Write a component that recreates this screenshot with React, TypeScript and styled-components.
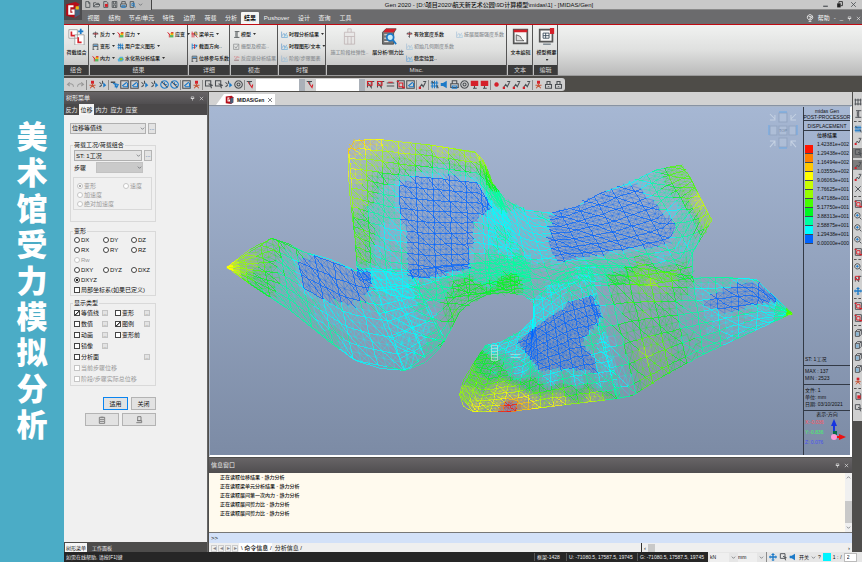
import React from "react";
import styled, { createGlobalStyle, css } from "styled-components";

const Global = createGlobalStyle`
  * { box-sizing: border-box; }
  html, body { margin: 0; height: 100%; }
  body { font: 6px/8px "Liberation Sans", "Noto Sans CJK SC", sans-serif; color: #111; overflow: hidden; }
  button, input, select { font: inherit; color: inherit; margin: 0; }
  button { padding: 0; border: 0; background: none; white-space: nowrap; }
  svg { display: block; flex: none; }
`;

/* ---------- frame ---------- */
const Page = styled.div`display: flex; height: 100vh; background: #4bacc6;`;
const Banner = styled.aside`
  width: 64px; flex: none; display: flex; justify-content: center; padding-top: 117px;
  background: #4bacc6;
`;
const BannerTitle = styled.h1`
  margin: 0; width: 32px; color: #fff; text-align: center; word-break: break-all;
  font: 900 31px/36px "Noto Sans CJK SC", sans-serif;
`;
const AppFrame = styled.main`flex: 1; min-width: 0; display: flex; flex-direction: column; background: #4f4e4c;`;

const Top = styled.header`display: grid; grid-template-columns: 18px 1fr; flex: none; background: #6b6b6d; border-bottom: 1px solid #c00a12;`;
const Logo = styled.button`height: 20px; align-self: start; background: #4c4c4e; display: grid; place-items: center;`;
const TopRows = styled.div`min-width: 0;`;
const TitleRow = styled.div`display: flex; align-items: center; height: 10px; background: #c9c9c9; border-bottom: 1px solid #8a8a8a;`;
const QuickBar = styled.div`display: flex; align-items: center; gap: 2px; width: 70px; height: 10px; padding-left: 2px; border-right: 1px solid #444; background: #bdbdbd;`;
const Title = styled.div`flex: 1; text-align: center; padding-left: 4px; white-space: nowrap; font-size: 6px; font-weight: 500;`;
const WinButtons = styled.div`display: flex; gap: 6px; padding-right: 4px; button { width: 8px; height: 8px; }`;
const MenuRow = styled.nav`display: flex; align-items: flex-end; height: 14px; padding-left: 1px; color: #f4f4f4;`;
const MenuTab = styled.button<{ $w: number; $on?: boolean }>`
  width: ${p => p.$w}px; height: 12px; text-align: center; font-size: 6px;
  ${p => p.$on && css`background: #f4f4f4; color: #111; border-radius: 1px 1px 0 0; font-weight: 700;`}
`;
const MenuEnd = styled.div`margin-left: auto; display: flex; align-items: center; gap: 4px; height: 12px; padding-right: 1px;`;

/* ---------- ribbon ---------- */
const Ribbon = styled.section`display: flex; gap: 1px; flex: none; height: 51px; background: linear-gradient(#f1f2f1, #dfe0df 50%, #bababa); border-bottom: 1px solid #999;`;
const Group = styled.section<{ $w: number }>`width: ${p => p.$w}px; flex: none; display: flex; flex-direction: column; border-right: 1px solid #555;`;
const GroupBody = styled.div`flex: 1; display: flex; gap: 2px; padding: 3px 0 0 2px;`;
const GroupName = styled.h2`margin: 0; height: 10px; background: #3b3b3b; color: #d8d8d8; font: inherit; line-height: 10px; text-align: center;`;
const Col = styled.div`display: flex; flex-direction: column;`;
const PushedCol = styled(Col)`margin-left: auto; padding-right: 5px;`;
const Tool = styled.button<{ $off?: boolean }>`
  display: flex; align-items: center; gap: 1px; height: 12px; font-size: 5px; font-weight: 500; color: ${p => (p.$off ? "#8d9195" : "#111")};
  svg { opacity: ${p => (p.$off ? 0.5 : 1)}; }
`;
const Caret = styled.i`width: 3px; height: 2px; flex: none; margin-left: 1px; background: #333; clip-path: polygon(0 0, 100% 0, 50% 100%);`;
const BigTool = styled.button<{ $w: number; $off?: boolean }>`
  display: flex; flex-direction: column; align-items: center; gap: 3px; width: ${p => p.$w}px; height: 36px; font-size: 5px; font-weight: 500;
  color: ${p => (p.$off ? "#8d9195" : "#111")}; svg { opacity: ${p => (p.$off ? 0.4 : 1)}; }
`;

const ToolStrip = styled.div`display: flex; height: 16px; flex: none; padding: 2px 0 1px; background: #4e4c48;`;
const Tools = styled.div`display: flex; align-items: center; gap: 1px; padding: 0 2px; background: #cfcfcf; border-radius: 0 3px 3px 0;`;
const IconButton = styled.button<{ $on?: boolean }>`width: 9px; height: 10px; display: grid; place-items: center; ${p => p.$on && css`background: #7d7d7d;`}`;
const Rule = styled.span`width: 1px; height: 10px; background: #8c8c8c;`;
const StripSelect = styled.select<{ $w: number }>`width: ${p => p.$w}px; height: 12px; border: 0; border-right: 6px solid #aab0b8; background: #fff; appearance: none; padding: 0;`;

/* ---------- work area ---------- */
const Work = styled.div`flex: 1; min-height: 0; display: grid; grid-template-columns: 144px minmax(0, 1fr) 9px; gap: 1px;`;
const Panel = styled.aside`display: flex; flex-direction: column; background: #f0f0f0; border-right: 1px solid #666;`;
const DarkHead = styled.div<{ $h: number }>`display: flex; align-items: center; justify-content: space-between; height: ${p => p.$h}px; flex: none; padding: 0 3px 0 2px; background: linear-gradient(#676466, #504e50); color: #eee;`;
const HeadIcons = styled.span`display: flex; gap: 4px;`;
const PanelTabs = styled.div`display: flex; height: 11px; flex: none; background: #4a4849; color: #eee;`;
const PanelTab = styled.button<{ $on?: boolean }>`width: 15px; height: 11px; ${p => p.$on && css`background: #f4f4f4; color: #111;`}`;
const Form = styled.form`flex: 1; width: 94px; padding: 7px 2px 0 6px; display: flex; flex-direction: column;`;
const Line = styled.div<{ $h?: number }>`display: flex; align-items: center; height: ${p => p.$h ?? 12}px; gap: 2px;`;
const Pick = styled.span<{ $w: number; $off?: boolean }>`
  width: ${p => p.$w}px; height: 11px; display: flex; align-items: center; 
  border: 1px solid ${p => (p.$off ? "#c2c2c2" : "#b0b0b0")}; background: ${p => (p.$off ? "#cacaca" : "#e3e3e3")};
  select { flex: 1; min-width: 0; height: 9px; padding: 0 1px; border: 0; background: none; appearance: none; }
`;
const StepLabel = styled.label`width: 20px;`;
const Dots = styled.button<{ $small?: boolean }>`
  width: ${p => (p.$small ? 6 : 8)}px; height: ${p => (p.$small ? 6 : 11)}px; line-height: 5px; flex: none;
  border: 1px solid ${p => (p.$small ? "#c4c4c4" : "#b5b5b5")}; background: #e3e3e3; color: ${p => (p.$small ? "#777" : "#1b4e94")};
`;
const Box = styled.fieldset<{ $mt: number; $h: number }>`
  margin: ${p => p.$mt}px 0 0; padding: 0 3px; height: ${p => p.$h}px; min-width: 0; border: 1px solid #d9d9d9;
  legend { padding: 0 1px; margin-left: -1px; height: 8px; }
`;
const Inner = styled.div`margin: 4px 0 0 -1px; padding: 3px; height: 33px; border: 1px solid #d9d9d9;`;
const Cells = styled.div<{ $cols: string; $row: number }>`display: grid; grid-template-columns: ${p => p.$cols}; grid-auto-rows: ${p => p.$row}px; align-items: center;`;
const Choice = styled.label<{ $off?: boolean; $wide?: boolean }>`
  display: flex; align-items: center; gap: 1px; white-space: nowrap; color: ${p => (p.$off ? "#999" : "#111")};
  ${p => p.$wide && css`grid-column: 1 / -1;`}
  input { appearance: none; width: 6px; height: 6px; flex: none; border: 1px solid ${p => (p.$off ? "#c6c6c6" : "#444")}; background: #fff; }
  input[type="radio"] { border-radius: 50%; }
  input[type="radio"]:checked { background: radial-gradient(${p => (p.$off ? "#aaa" : "#222")} 45%, #fff 55%); }
  input[type="checkbox"]:checked { background: linear-gradient(135deg, #fff 40%, #333 45% 60%, #fff 65%); }
`;
const Actions = styled.div<{ $mt: number }>`display: flex; justify-content: flex-end; gap: 3px; margin-top: ${p => p.$mt}px;`;
const PushButton = styled.button<{ $w: number; $main?: boolean }>`
  width: ${p => p.$w}px; height: 13px; display: grid; place-items: center;
  border: ${p => (p.$main ? "1px solid #0a84f0" : "1px solid #b3b3b3")}; background: #e2e2e2;
`;
const BottomTabs = styled.div`display: flex; align-items: center; gap: 4px; height: 12px; flex: none; padding-left: 1px; background: #4d4c4b; color: #eee; button { padding: 0 1px; line-height: 10px; font-size: 5px; }`;
const BottomOn = styled.button`background: #f6f6f6; color: #111;`;

const Center = styled.div`display: flex; flex-direction: column; min-width: 0;`;
const DocTabs = styled.div`display: flex; align-items: center; height: 14px; flex: none; padding-left: 7px; background: #d2d2d2; border-bottom: 1px solid #8893a3;`;
const DocTab = styled.button`
  display: flex; align-items: center; gap: 3px; height: 11px; padding: 0 2px 0 9px; background: #fff; font-size: 5px; font-weight: 700; align-self: flex-end;
  clip-path: polygon(8px 0, 100% 0, 100% 100%, 0 100%);
`;
const View = styled.div`
  flex: 1; min-height: 0; display: grid; grid-template-columns: minmax(0, 1fr) 47px;
  border: 1px solid #aab6c8; border-right: 2px solid #fff; border-bottom: 2px solid #fff; background: linear-gradient(#a6b7d3, #7c8ba5);
`;
const Drawing = styled.svg`width: 100%; height: 100%; min-height: 0;`;
const Legend = styled.aside`
  border-left: 1px solid #333a46; display: flex; flex-direction: column; text-align: center; font-size: 5px; line-height: 6px;
`;
const LegendHead = styled.div<{ $h: number }>`height: ${p => p.$h}px; border-bottom: 1px solid #333a46; font-weight: 500; white-space: nowrap; display: grid; place-content: center;`;
const LegendTitle = styled.h3`margin: 0; height: 9px; font: inherit; font-weight: 500; line-height: 9px;`;
const Scale = styled.div`display: grid; grid-template-columns: 8px 1fr; padding-left: 1px;`;
const Swatches = styled.div`display: flex; flex-direction: column; padding-top: 5px;`;
const Swatch = styled.span<{ $c: string }>`height: 9px; background: ${p => p.$c}; border-bottom: 1px solid #3e4755;`;
const Values = styled.div`line-height: 9px; text-align: right; padding-right: 1px;`;
const Info = styled.div<{ $push?: boolean }>`margin-top: ${p => (p.$push ? "auto" : 0)}; padding: 2px 0 2px 1px; text-align: left; line-height: 7px; border-bottom: 1px solid #333a46; white-space: nowrap;`;
const Axes = styled.div`display: flex; height: 38px; padding-left: 1px; text-align: left; line-height: 10px; white-space: nowrap;`;
const AxisText = styled.span<{ $c: string }>`display: block; color: ${p => p.$c};`;

const Messages = styled.section`height: 97px; padding-top: 1px; flex: none; display: flex; flex-direction: column; background: #4f4e4c;`;
const Log = styled.div`display: flex; flex: 1; min-height: 0; border-bottom: 1px solid #777; background: #fffaee;`;
const LogText = styled.ol`flex: 1; margin: 0; padding: 0 0 0 11px; list-style: none; font-size: 5px; font-weight: 500; line-height: 9px;`;
const VScroll = styled.div`width: 7px; background: #f0f0f0; display: flex; flex-direction: column; align-items: center; justify-content: space-between; padding: 2px 0;`;
const VThumb = styled.span`width: 7px; height: 22px; margin: auto 0 2px; background: #c9c9c9;`;
const Command = styled.input`height: 10px; border: 0; padding: 0 2px; background: #d3e1f8; outline: 0;`;
const LogTabs = styled.div`display: flex; align-items: center; gap: 1px; height: 11px; flex: none; background: #efefef; padding-left: 2px;`;
const LogTab = styled.button<{ $on?: boolean }>`height: 10px; padding-left: 2px; font-size: 6px; ${p => p.$on && css`background: #fff; font-weight: 500;`}`;
const Nav = styled.button`width: 6px; height: 7px; display: grid; place-items: center; border: 1px solid #ccc; line-height: 5px; color: #888;`;
const HScroll = styled.div`margin-left: auto; width: 211px; height: 10px; display: flex; align-items: center; justify-content: space-between; border-left: 1px solid #333; padding: 0 2px;`;
const HThumb = styled.span`width: 7px; height: 8px; margin: 0 auto 0 2px; background: #c9c9c9;`;

const RightBar = styled.div`display: flex; flex-direction: column; align-items: center; gap: 2px; align-self: start; padding: 5px 0 8px; background: #d0d0d0;`;
const Dash = styled.span`width: 7px; height: 1px; border-top: 1px dashed #555;`;

const Status = styled.footer`display: flex; align-items: center; height: 10px; flex: none; background: #262626; color: #eee; font-size: 5px; padding-left: 2px; white-space: nowrap;`;
const Spacer = styled.span`flex: 1;`;
const Coord = styled.span<{ $w: number }>`width: ${p => p.$w}px; border-left: 1px solid #555; padding-left: 2px;`;
const StatusTools = styled.div`
  display: flex; align-items: center; gap: 2px; height: 10px; width: 154px; padding: 0 2px; background: #e6e6e6; color: #111;
  select { width: 19px; height: 9px; border: 0; background: #efefef; padding: 0; appearance: none; }
  input { width: 13px; height: 9px; border: 1px solid #bbb; background: #fff; padding: 0 2px; }
`;
const Color = styled.button`width: 8px; height: 8px; background: #00f4ff;`;

/* ---------- icons ---------- */
const R = "#d5202a", B = "#1c7ac8", G = "#4a4e52", Y = "#f2b70e";
type Shape = [string, string, boolean?];
const shapes: Record<string, Shape[]> = {
  force: [["M6 1v10M1 5h10M2 5l2-3M10 5L8 2M6 11L4 9", G], ["M3 5h6", R]],
  frame: [["M2 11V2h8v9M2 6h8M1 11h3M8 11h3", G], ["M3 4h6", B]],
  stress: [["M1 2l3 4v5M3 4l2 3", R], ["M6 3h5v4H6z", Y, true], ["M5 7h6v4H5z", "#59b65b", true], ["M7 2h4v2H7z", R, true]],
  grid: [["M3 1v10M6 1v10M9 1v10M1 4h10M1 8h10", B], ["M2 2l3 2M9 7l2 4", G]],
  plate: [["M1 8l4-5h5l2 5-3 3H2z", "#58b0db", true], ["M4 5h5l1 3-4 2z", "#59bd49", true], ["M6 6h2v2H6z", Y, true]],
  member: [["M2 1v10M5 3v8M1 5h7M8 8l3 3", R], ["M6 2h4v5H6z", G], ["M6 2l5 5", Y]],
  split: [["M2 1v10M2 4h9M2 8h6", B], ["M6 2v8", R], ["M8 2l3 3-3 3z", B, true]],
  ibeam: [["M3 1h8M7 1v10M2 11h9M5 2v8", G]],
  check: [["M1 2h9v9H1z", G], ["M3 6l2 3 5-7", G]],
  dotted: [["M2 3h2M6 3h2M10 3v2M2 9h8M4 7l4-4", R], ["M2 9h8", G]],
  chart: [["M1 1v10h10", "#79a7d0"], ["M2 8l3-4 2 4 3-5", "#79a7d0"], ["M6 7h5v4H6z", "#8ec4e2"]],
  doc: [["M3 1h5l2 2v8H3z", G], ["M8 1v3h2", G]],
  open: [["M1 10V3h4l1 1h4v2M1 10l3-4h8l-2 4z", G]],
  save: [["M2 1h8v10H2z", G], ["M4 1v4h4V1M4 11V7h4v4", G]],
  red: [["M3 1h5l2 2v8H3z", G], ["M5 5h5v5H5z", R, true]],
  app: [["M1 2l8-1 2 2v7l-3 2-7-1z", "#b50d18", true], ["M7 5l4-2v7l-4 2z", "#45617b", true], ["M6 4H4v4h2V6", "#fff"]],
  print: [["M3 5V1h6v4M1 5h10v5H1z", G], ["M3 8h6v3H3z", B]],
  zoom: [["M2 1h6v10H2z", G], ["M5 4h4v4H5zM9 8l2 3", B]],
  undo: [["M10 9c0-4-4-5-7-3M5 3L2 6l3 2", "#999"]],
  redo: [["M2 9c0-4 4-5 7-3M7 3l3 3-3 2", "#999"]],
  person: [["M4 1h4v4H4z", R, true], ["M6 5v3M3 11l3-4 3 4M2 7h8", "#c55435"]],
  pointer: [["M1 2h6v2H1z", G, true], ["M4 4l3 2v4M7 5l4 1-2 4z", B]],
  box: [["M1 1h10v10H1z", G], ["M3 8l6-5M4 9h6V4", B]],
  clock: [["M6 1a5 5 0 1 0 .1 0M6 3v3h3", B], ["M2 2l8 8", G]],
  select: [["M2 1h7v7H2z", G], ["M6 5l5 2-2 1 1 3", G]],
  arrow: [["M3 3l5 7 1-4", R], ["M1 2h7M5 2v4", G]],
  spark: [["M2 3l3 3M2 9l3-2M6 1v4", G], ["M7 3l4 4-4 3z", B, true]],
  line: [["M1 4h10M1 8h10", G], ["M3 3h6", R]],
  curve: [["M2 10V3l5 7V2h4", G], ["M2 2h6v5H2z", R]],
  speaker: [["M1 4h3l5-3v10L4 8H1z", B, true]],
  target: [["M6 1a5 5 0 1 0 .1 0M6 4a2 2 0 1 0 .1 0", G]],
  monitor: [["M1 1h10v7H1z", R, true], ["M4 11h5M6 8v3", G]],
  dot: [["M6 3a3 3 0 1 0 .1 0", R, true]],
  node: [["M2 10l3-4 2 3 3-6M7 2h4", G], ["M1 9h3v3H1z", R, true]],
  lock: [["M2 6h8v5H2zM4 6V2h4v4", G], ["M5 8h2v1H5z", G, true]],
  dots: [["M2 1v10M6 1v10M10 1v10M1 3h10M1 9h10", G]],
  pan: [["M6 0l3 3H7v2h3V3l2 3-2 3V7H7v3h2l-3 2-3-2h2V7H2v2L0 6l2-3v2h3V3H3z", B, true]],
  mag: [["M5 1a4 4 0 1 0 .1 0M8 8l3 3", G], ["M3 5h4M5 3v4", B]],
  fit: [["M2 1h9v10H2z", G], ["M1 1h3v2H1zM8 9h4v2H8z", R, true], ["M4 4h5v5H4z", R]],
  cube: [["M2 4l3-3h6v7l-3 3H2zM2 4h6v7M8 4l3-3", G], ["M3 5h4v5H3z", "#87b5d5", true]],
  help: [["M6 1a4 4 0 1 0 .1 0M4 4h4v2H6v2M4 11h4", "#eee"]],
  pin: [["M3 2h6v4H3zM2 6h8M6 6v5", "#eee"]],
  close: [["M2 2l8 8M10 2l-8 8", "#eee"]],
  closeDark: [["M2 2l8 8M10 2l-8 8", G]],
  min: [["M2 8h8v2H2z", G, true]],
  restore: [["M2 4h6v7H2z", "#222", true], ["M5 4V1h6v7H8", "#222"]],
  down: [["M2 4l4 4 4-4", G]],
  up: [["M2 8l4-4 4 4", G]],
  sheet: [["M2 2h8v9H2zM3 5h6M3 8h6", "#777"], ["M4 1h4v2H4z", "#888", true]],
  seat: [["M4 1h5v6H4zM2 10h8M3 7h7v3", "#777"]],
};
const Icon = ({ k, s = 8 }: { k: string; s?: number }) => (
  <svg width={s} height={s} viewBox="0 0 12 12" aria-hidden="true">
    {shapes[k].map(([d, c, fill], i) => <path key={i} d={d} fill={fill ? c : "none"} stroke={fill ? "none" : c} strokeWidth={1.4} />)}
  </svg>
);
const bigArt: Record<string, React.ReactNode> = {
  combo: <><path d="M1 2h10v10H1zM8 8h11v12H8z" fill="#fff" stroke="#999" /><path d="M4 4v5h4M12 11v6h4" stroke={R} strokeWidth="2" fill="none" /><path d="M15 1v6M12 4h6" stroke={B} strokeWidth="2" /></>,
  table: <path d="M4 5h12v14H4zM8 5V1h4v4M4 10h12M8 10v9M12 10v9" stroke="#8b6f73" fill="#e8e4e4" />,
  report: <><path d="M3 5l4-4h12l-3 5v13H3z" fill="#777" stroke="#444" /><path d="M7 1h12l-3 4H4z" fill={R} /><path d="M5 8h8M5 12h6M5 16h5" stroke="#fff" /><circle cx="12" cy="11" r="4" fill="#c8ebf8" stroke={B} strokeWidth="2" /><path d="M15 14l4 5" stroke={B} strokeWidth="2" /></>,
  text: <><path d="M2 2h16v16H2z" fill="#f8f8f8" stroke="#555" strokeWidth="2" /><path d="M2 2h16v3H2z" fill={R} /><path d="M5 8v7h9c-2-1-3-2-4-5z" stroke="#555" fill="#ddd" /></>,
  screen: <><path d="M2 2h15v14H2z" fill="#f8f8f8" stroke="#555" strokeWidth="2" /><path d="M6 6h7v6H6zM6 9h7M9 6v6M6 19h9" stroke="#345" fill="#fff" /><path d="M14 0h5v7h-5z" fill={R} /></>,
};
const Big = ({ k }: { k: string }) => <svg width="17" height="17" viewBox="0 0 20 20" aria-hidden="true">{bigArt[k]}</svg>;

/* ---------- displacement mesh ---------- */
type P = [number, number];
const palette = ["#0064ff", "#00ffff", "#00ffa0", "#00f820", "#46ff00", "#96ff00", "#c8ff00", "#ffff00", "#ffc800", "#ff8000", "#ff1400"];
const outline: P[] = [[227,267],[250,249],[272,238],[289,244],[304,252],[330,259],[357,271],[355,240],[349,190],[348,152],[354,141],[375,139],[430,145],[475,152],[484,162],[492,183],[505,200],[525,210],[551,213],[575,207],[600,193],[630,183],[655,170],[680,165],[690,178],[711,220],[692,252],[691,278],[720,277],[755,279],[791,313],[765,325],[700,355],[660,377],[632,395],[617,398],[550,406],[510,411],[473,411],[463,406],[459,394],[463,380],[475,360],[485,345],[500,342],[520,331],[533,318],[533,303],[524,295],[505,292],[487,294],[470,302],[459,312],[450,330],[440,347],[425,362],[405,370],[380,368],[355,360],[330,342],[290,310],[250,284]];
const blues: P[][] = [
  [[397,184],[420,176],[452,177],[476,181],[491,207],[474,222],[470,250],[468,268],[425,279],[409,276],[407,236],[398,206]],
  [[551,213],[575,207],[600,193],[634,183],[656,205],[674,226],[669,243],[610,252],[555,262],[548,245]],
  [[297,261],[315,256],[328,259],[356,272],[371,272],[370,292],[357,303],[322,300],[304,291]],
  [[550,315],[570,302],[592,297],[601,316],[580,343],[594,358],[596,372],[567,368],[540,370],[517,342]],
  [[702,304],[715,292],[745,282],[760,284],[778,301],[755,304],[722,312]],
];
const samples: [number, number, number][] = [
  [227,267,6.6],[250,262,4.8],[268,252,3.6],[262,280,3.3],[285,262,2],[285,290,1.6],[300,315,2],[330,340,2],[325,315,1.2],[350,350,1.2],[370,350,1],[400,350,1],[400,330,1],[400,315,1],[420,330,1],[430,310,1.5],[440,335,1.7],[445,345,2.6],[452,312,3.4],[430,285,1.7],[400,285,1],[375,275,1],[350,320,1],[270,285,2.6],
  [350,145,7.8],[370,141,7.4],[400,148,6.2],[352,175,6.6],[440,150,6],[476,158,5.6],[430,160,4],[400,160,4.2],[370,165,5.2],[358,200,5],[362,240,3.8],[375,210,2],[390,230,1],[380,250,1.2],[388,190,1.6],[380,180,3],[440,170,1.7],[362,262,3.8],[486,175,4],[500,200,2],[495,215,1],[480,240,1],
  [520,225,1.1],[535,235,1],[505,245,1.3],[480,275,2.2],[470,290,3.3],[510,285,3.2],[500,265,1.9],[530,275,1.9],[540,250,1],[560,275,1.8],[640,180,1.2],[655,178,2],[665,195,2.2],[675,175,4],[685,190,3.8],[700,200,6.4],[706,215,5],[685,220,1.7],[672,210,1],[680,245,1.5],[660,255,1.3],[620,262,1.8],[580,268,1.6],
  [640,277,4.2],[650,282,4.8],[620,285,3.2],[670,278,4],[685,285,2.8],[640,310,3.6],[630,300,3.3],[625,330,3.2],[660,330,3],[690,345,2.5],[645,355,4.6],[655,345,4.2],[650,375,4],[622,380,1.3],[608,365,1],[715,310,1.2],[720,325,1.3],[690,315,2],[720,340,1.7],[740,330,1.3],[740,275,1.4],[700,290,1.2],[765,315,1.1],[782,313,1.4],[791,313,5.5],
  [590,285,1.4],[560,290,1.4],[545,310,1],[530,325,1],[495,348,1.2],[515,350,1],[485,362,3.3],[490,370,2.6],[470,375,3.7],[465,395,5],[480,385,4.3],[475,406,6.8],[500,395,6.6],[510,408,10.4],[525,402,8.2],[560,402,7],[595,398,6],[570,392,3.4],[530,385,2.8],[520,370,1.2],[550,377,1],[575,380,1.2],[600,384,1.4],[610,340,1],[600,310,1.1],[613,315,2]
];
const inside = (x: number, y: number, poly: P[]) => {
  let r = false;
  for (let i = 0, j = poly.length - 1; i < poly.length; j = i++) {
    const [a, b] = poly[i], [c, d] = poly[j];
    if (b > y !== d > y && x < ((c - a) * (y - b)) / (d - b) + a) r = !r;
  }
  return r;
};
const distance = (x: number, y: number, poly: P[]) => poly.reduce((best, [a, b], i) => {
  const [c, d] = poly[(i + 1) % poly.length];
  const t = Math.max(0, Math.min(1, ((x - a) * (c - a) + (y - b) * (d - b)) / ((c - a) ** 2 + (d - b) ** 2)));
  return Math.min(best, Math.hypot(x - a - t * (c - a), y - b - t * (d - b)));
}, 999);
let seed = 17;
const rnd = () => ((seed = (seed * 16807) % 2147483647) / 2147483647);
const level = (x: number, y: number) => {
  if (blues.some(b => inside(x, y, b))) return 0;
  let w = 0, v = 0;
  for (const [a, b, c] of samples) {
    const d = 1 / (((x - a) ** 2 + (y - b) ** 2) ** 1.5 + 20);
    w += d; v += c * d;
  }
  const halo = 1 + Math.min(...blues.map(b => distance(x, y, b))) / 5;
  return Math.max(1, Math.min(10, Math.round(Math.min(v / w, halo) + (rnd() - 0.5) * 0.6)));
};
const along = (line: P[], t: number): P => {
  const len = line.slice(1).map((p, i) => Math.hypot(p[0] - line[i][0], p[1] - line[i][1]));
  let rest = t * len.reduce((a, b) => a + b, 0);
  for (let i = 0; i < len.length; i++) {
    if (rest <= len[i] || i === len.length - 1) {
      const f = len[i] ? Math.min(1, rest / len[i]) : 0;
      return [line[i][0] + (line[i + 1][0] - line[i][0]) * f, line[i][1] + (line[i + 1][1] - line[i][1]) * f];
    }
    rest -= len[i];
  }
  return line[0];
};
const patches: [P[], P[], number, number][] = [
  [[[227,266],[272,238],[304,252],[357,271],[410,272]], [[227,268],[290,310],[355,360],[405,370],[445,340]], 30, 12],
  [[[357,268],[410,270],[460,265],[530,255]], [[405,370],[440,347],[459,312],[487,294],[530,292]], 20, 9],
  [[[348,139],[375,139],[430,145],[478,153],[500,195]], [[357,275],[390,295],[430,300],[490,292],[530,280]], 32, 28],
  [[[485,165],[525,210],[551,213],[600,193],[655,170],[682,164]], [[490,294],[540,300],[580,280],[640,285],[691,278],[712,222]], 36, 20],
  [[[580,265],[620,265],[691,276],[755,279],[791,313]], [[617,398],[632,395],[700,355],[765,325],[791,314]], 30, 13],
  [[[483,345],[533,318],[533,300],[560,275],[590,265]], [[459,395],[473,411],[510,411],[550,406],[620,398]], 40, 28],
];
const buildMesh = () => {
  const major = palette.map(() => ""), minor = palette.map(() => "");
  const seg = (a: P, b: P, bold: boolean) => {
    const mx = (a[0] + b[0]) / 2, my = (a[1] + b[1]) / 2;
    if (!inside(mx, my, outline)) return;
    (bold ? major : minor)[level(mx, my)] += `M${a[0].toFixed(1)} ${a[1].toFixed(1)}L${b[0].toFixed(1)} ${b[1].toFixed(1)}`;
  };
  for (const [top, bottom, n, m] of patches) {
    const pts: P[][] = [];
    for (let i = 0; i <= n; i++) {
      const a = along(top, i / n), b = along(bottom, i / n);
      pts.push(Array.from({ length: m + 1 }, (_, j) => {
        const e = j > 0 && j < m ? 1 : 0, t = j / m;
        return [a[0] + (b[0] - a[0]) * t + (rnd() - 0.5) * e, a[1] + (b[1] - a[1]) * t + (rnd() - 0.5) * e] as P;
      }));
    }
    for (let i = 0; i <= n; i++) for (let j = 0; j <= m; j++) {
      if (i < n) seg(pts[i][j], pts[i + 1][j], j % 2 === 0);
      if (j < m) seg(pts[i][j], pts[i][j + 1], i % 3 === 0);
      if (i < n && j < m) {
        seg(pts[i][j], pts[i + 1][j + 1], (i + m - j) % 3 === 0);
        if (rnd() > 0.4) seg(pts[i + 1][j], pts[i][j + 1], false);
      }
    }
  }
  outline.forEach((p, i) => {
    const q = outline[(i + 1) % outline.length];
    const at = (k: number): P => [p[0] + ((q[0] - p[0]) * k) / 6, p[1] + ((q[1] - p[1]) * k) / 6];
    for (let k = 0; k < 6; k++) {
      const a = at(k), b = at(k + 1);
      major[level(a[0], a[1])] += `M${a[0].toFixed(1)} ${a[1].toFixed(1)}L${b[0].toFixed(1)} ${b[1].toFixed(1)}`;
    }
  });
  return { major, minor };
};
const mesh = buildMesh();
const order = [1, 2, 3, 4, 5, 6, 7, 8, 9, 10, 0];

const Model = () => (
  <Drawing viewBox="210 107 592 347" role="img" aria-label="位移等值线">
    <g fill="none">
      {order.map(i => <path key={i} d={mesh.minor[i]} stroke={palette[i]} strokeWidth={0.5} strokeOpacity={0.7} />)}
      {order.map(i => <path key={i} d={mesh.major[i]} stroke={palette[i]} strokeWidth={0.8} strokeOpacity={0.9} shapeRendering="crispEdges" />)}
    </g>
    <g fill="#b5c5dc" fillOpacity=".6" stroke="#93a5c1">
      <path d="M778 113h8v9h-8zM778 126h8v9h-8zM769 126h7v9h-7zM788 126h7v9h-7zM778 138h8v9h-8z" />
      <path d="M769 114l5 5M774 115v5h-5M795 114l-5 5M790 115v5h5M769 147l5-6M769 141h5v5M795 147l-5-6M790 146v-5h5" fill="none" stroke="#c6d2e3" />
      <path d="M778 112h8M778 148h8M768 125v10M796 125v10" stroke="#6da9e6" />
    </g>
    <text x="778" y="132" fontSize="4" fill="#687d98">TOP</text>
    <g fill="none" stroke="#bce9df" strokeWidth=".7"><path d="M491 345h6v15h-6zM491 348h6M491 351h6M491 354h6M491 357h6M510 354h10M510 357h10" /></g>
  </Drawing>
);

/* ---------- data ---------- */
const menus: [string, number][] = [["视图", 21], ["结构", 21], ["节点/单元", 33], ["特性", 21], ["边界", 21], ["荷载", 21], ["分析", 20], ["结果", 18], ["Pushover", 35], ["设计", 20], ["查询", 21], ["工具", 21]];
const strip = "person,spark,|,pointer,box,box,spark,spark,clock,clock,|,box,person,|,select,select,spark,target,|,arrow".split(",");
const strip2 = "curve,curve,line,fit,box,|,node,|,grid,speaker,print,target,monitor,monitor,|,dot,node,node,node,|,person,lock,lock".split(",");
const rightIcons = "dots,ibeam,-,grid,node,select*,node*,node,closeDark,-,fit,mag,mag,mag,fit,-,mag,curve,pan,-,fit,fit,-,cube,cube,cube,cube,person,-,red,select".split(",");
const values = ["1.42381e+002", "1.29438e+002", "1.16494e+002", "1.03550e+002", "9.06063e+001", "7.76625e+001", "6.47188e+001", "5.17750e+001", "3.88313e+001", "2.58875e+001", "1.29438e+001", "0.00000e+000"];
const logs = ["正在读取位移结果 - 静力分析", "正在读取梁单元分析结果 - 静力分析", "正在读取层间第一次内力 - 静力分析", "正在读取层间剪力比 - 静力分析", "正在读取层间剪力比 - 静力分析"];

const T = ({ k, off, menu, children }: { k: string; off?: boolean; menu?: boolean; children: React.ReactNode }) => <Tool $off={off}><Icon k={k} s={7} />{children}{menu && <Caret />}</Tool>;
const Opt = ({ type = "radio", name, off, on, wide, children }: { type?: string; name?: string; off?: boolean; on?: boolean; wide?: boolean; children: React.ReactNode }) => (
  <Choice $off={off} $wide={wide}><input type={type} name={name} disabled={off} defaultChecked={on} />{children}</Choice>
);
const Row = ({ list, name }: { list: string[]; name: string }) => <>{list.map((k, i) => k === "|" ? <Rule key={i} /> : <IconButton key={i} aria-label={name + i}><Icon k={k} s={9} /></IconButton>)}</>;

export default function App() {
  return (
    <Page>
      <Global />
      <Banner><BannerTitle>美术馆受力模拟分析</BannerTitle></Banner>
      <AppFrame>
        <Top>
          <Logo aria-label="MIDAS">
            <svg width="16" height="18" viewBox="0 0 15 17"><path d="M1 3l9-2 4 2v10l-4 3-9-2z" fill="#b50d18" /><path d="M9 7l5-4v10l-5 3z" fill="#45617b" /><path d="M10 5h3v3h-3z" fill={Y} /><path d="M8 5H4v7h4V9H6" fill="none" stroke="#fff" strokeWidth="2" /></svg>
          </Logo>
          <TopRows>
            <TitleRow>
              <QuickBar>{["doc", "open", "red", "save", "print", "zoom", "down"].map(k => <button key={k} aria-label={k}><Icon k={k} s={k === "down" ? 5 : 7} /></button>)}</QuickBar>
              <Title>Gen 2020 - [D:\项目2020\航天新艺术公园\9D计算模型\midas\1] - [MIDAS/Gen]</Title>
              <WinButtons>{["min", "restore", "closeDark"].map(k => <button key={k} aria-label={k}><Icon k={k} s={7} /></button>)}</WinButtons>
            </TitleRow>
            <MenuRow>
              {menus.map(([m, w]) => <MenuTab key={m} $w={w} $on={m === "结果"}>{m}</MenuTab>)}
              <MenuEnd><Icon k="help" s={8} /><span>帮助</span><span>-</span><span>_</span><Icon k="pin" s={5} /><Icon k="close" s={5} /></MenuEnd>
            </MenuRow>
          </TopRows>
        </Top>
        <Ribbon>
          <Group $w={25}><GroupBody><BigTool $w={21}><Big k="combo" />荷载组合</BigTool></GroupBody><GroupName>组合</GroupName></Group>
          <Group $w={98}>
            <GroupBody>
              <Col><T k="force" menu>反力</T><T k="frame" menu>变形</T><T k="stress" menu>内力</T></Col>
              <Col><T k="stress" menu>应力</T><T k="grid" menu>用户定义图形</T><T k="plate" menu>水化热分析结果</T></Col>
              <PushedCol><T k="stress" menu>应变</T></PushedCol>
            </GroupBody>
            <GroupName>结果</GroupName>
          </Group>
          <Group $w={41}><GroupBody><Col><T k="member" menu>梁单元</T><T k="split">截面方向..</T><T k="frame">位移参与系数</T></Col></GroupBody><GroupName>详细</GroupName></Group>
          <Group $w={47}><GroupBody><Col><T k="ibeam" menu>模型</T><T k="check" off>振型及模态..</T><T k="dotted" off>反应谱分析结果</T></Col></GroupBody><GroupName>模态</GroupName></Group>
          <Group $w={47}><GroupBody><Col><T k="chart" menu>时程分析结果</T><T k="chart" menu>时程图形/文本</T><T k="chart" off>阶段/步骤图表</T></Col></GroupBody><GroupName>时程</GroupName></Group>
          <Group $w={180}>
            <GroupBody>
              <BigTool $w={41} $off><Big k="table" />施工阶段柱弹性..</BigTool>
              <BigTool $w={32}><Big k="report" />层分析/侧力比</BigTool>
              <Col><T k="force">有效宽度系数</T><T k="chart" off>初始几何刚度系数</T><T k="chart">稳定验算..</T></Col>
              <Col><T k="chart" off>按层屈服强度系数</T></Col>
            </GroupBody>
            <GroupName>Misc.</GroupName>
          </Group>
          <Group $w={25}><GroupBody><BigTool $w={21}><Big k="text" />文本编辑</BigTool></GroupBody><GroupName>文本</GroupName></Group>
          <Group $w={24}><GroupBody><BigTool $w={21}><Big k="screen" />模型概要<Caret /></BigTool></GroupBody><GroupName>编辑</GroupName></Group>
        </Ribbon>
        <ToolStrip>
          <Tools>
            <Row name="编辑" list={["undo", "redo", "|"]} />
            <Row name="选择" list={strip} />
            <StripSelect $w={49} aria-label="节点"><option></option></StripSelect>
            <Row name="过滤" list={["arrow"]} />
            <StripSelect $w={49} aria-label="单元"><option></option></StripSelect>
            <Row name="工具" list={strip2} />
          </Tools>
        </ToolStrip>
        <Work>
          <Panel>
            <DarkHead $h={12}><span>树形菜单</span><HeadIcons><Icon k="pin" s={5} /><Icon k="close" s={5} /></HeadIcons></DarkHead>
            <PanelTabs>{["反力", "位移", "内力", "应力", "应变"].map(t => <PanelTab key={t} $on={t === "位移"}>{t}</PanelTab>)}</PanelTabs>
            <Form onSubmit={e => e.preventDefault()}>
              <Line><Pick $w={76}><select aria-label="结果类型"><option>位移等值线</option></select><Icon k="down" s={5} /></Pick><Dots type="button">...</Dots></Line>
              <Box $mt={7} $h={81}>
                <legend>荷载工况/荷载组合</legend>
                <Line $h={13}><Pick $w={69}><select aria-label="荷载工况"><option>ST: 1工况</option></select><Icon k="down" s={5} /></Pick><Dots type="button">...</Dots></Line>
                <Line $h={11}><StepLabel htmlFor="step">步骤</StepLabel><Pick $w={47} $off><select id="step" disabled /><Icon k="down" s={5} /></Pick></Line>
                <Inner><Cells $cols="46px 1fr" $row={9}><Opt name="k" off on>变形</Opt><Opt name="k" off>速度</Opt><Opt name="k" off wide>加速度</Opt><Opt name="k" off wide>绝对加速度</Opt></Cells></Inner>
              </Box>
              <Box $mt={5} $h={69}>
                <legend>变形</legend>
                <Cells $cols="29px 28px 1fr" $row={10}>
                  {["DX", "DY", "DZ", "RX", "RY", "RZ"].map(t => <Opt key={t} name="d">{t}</Opt>)}
                  <Opt name="d" off wide>Rw</Opt>
                  {["DXY", "DYZ", "DXZ"].map(t => <Opt key={t} name="d">{t}</Opt>)}
                  <Opt name="d" wide on>DXYZ</Opt>
                  <Opt type="checkbox" wide>局部坐标系(如果已定义)</Opt>
                </Cells>
              </Box>
              <Box $mt={3} $h={87}>
                <legend>显示类型</legend>
                <Cells $cols="28px 13px 29px 1fr" $row={11}>
                  <Opt type="checkbox" on>等值线</Opt><Dots type="button" $small>..</Dots><Opt type="checkbox">变形</Opt><Dots type="button" $small>..</Dots>
                  <Opt type="checkbox">数值</Opt><Dots type="button" $small>..</Dots><Opt type="checkbox" on>图例</Opt><Dots type="button" $small>..</Dots>
                  <Opt type="checkbox">动画</Opt><Dots type="button" $small>..</Dots><Opt type="checkbox">变形前</Opt><span />
                  <Opt type="checkbox">镜像</Opt><Dots type="button" $small>..</Dots><span /><span />
                  <Opt type="checkbox">分析面</Opt><span /><span /><Dots type="button" $small>..</Dots>
                  <Opt type="checkbox" off wide>当前步骤位移</Opt>
                  <Opt type="checkbox" off wide>阶段/步骤实际总位移</Opt>
                </Cells>
              </Box>
              <Actions $mt={11}><PushButton $w={25} $main>适用</PushButton><PushButton $w={25} type="button">关闭</PushButton></Actions>
              <Actions $mt={3}><PushButton $w={34} type="button" aria-label="表格"><Icon k="sheet" s={8} /></PushButton><PushButton $w={34} type="button" aria-label="打印"><Icon k="seat" s={8} /></PushButton></Actions>
            </Form>
            <BottomTabs><BottomOn>树形菜单</BottomOn><button>工作面板</button></BottomTabs>
          </Panel>
          <Center>
            <DocTabs><DocTab><Icon k="app" s={9} />MIDAS/Gen<Icon k="closeDark" s={6} /></DocTab></DocTabs>
            <View>
              <Model />
              <Legend>
                <LegendHead $h={14}>midas Gen<br />POST-PROCESSOR</LegendHead>
                <LegendHead $h={10}>DISPLACEMENT</LegendHead>
                <LegendTitle>位移结果</LegendTitle>
                <Scale>
                  <Swatches>{[...palette].reverse().map(c => <Swatch key={c} $c={c} />)}</Swatches>
                  <Values>{values.map((v, i) => <div key={i}>{v}</div>)}</Values>
                </Scale>
                <Info $push>ST: 1工况</Info>
                <Info>MAX : 137<br />MIN : 2523</Info>
                <Info>文件: 1<br />单位: mm<br />日期: 03/10/2021</Info>
                <div>表示-方向</div>
                <Axes>
                  <div><AxisText $c="#ff5560">X:-0.036</AxisText><AxisText $c="#45f567">Y:-0.836</AxisText><AxisText $c="#4a52f0">Z: 0.076</AxisText></div>
                  <svg width="22" height="30" viewBox="0 0 22 30"><path d="M10 20V8" stroke="#1534e0" strokeWidth="2" /><path d="M7 9l3-7 3 7z" fill="#1534e0" /><path d="M9 14h4v4H9z" fill="#086b4a" /><path d="M11 20h7" stroke="#e11" strokeWidth="2" /><path d="M15 17l7 3-7 3z" fill="#e11" /><circle cx="10" cy="20" r="3" fill="#ff9bd8" /></svg>
                </Axes>
              </Legend>
            </View>
            <Messages>
              <DarkHead $h={15}><span>信息窗口</span><HeadIcons><Icon k="pin" s={5} /><Icon k="close" s={5} /></HeadIcons></DarkHead>
              <Log>
                <LogText>{logs.map((l, i) => <li key={i}>{l}</li>)}</LogText>
                <VScroll><Icon k="up" s={5} /><VThumb /><Icon k="down" s={5} /></VScroll>
              </Log>
              <Command aria-label="命令" defaultValue=">>" />
              <LogTabs>
                {["◂", "◂", "▸", "▸"].map((t, i) => <Nav key={i}>{t}</Nav>)}
                <LogTab $on>\ 命令信息 /</LogTab><LogTab>分析信息 /</LogTab>
                <HScroll><span>‹</span><HThumb /><span>›</span></HScroll>
              </LogTabs>
            </Messages>
          </Center>
          <RightBar>
            {rightIcons.map((k, i) => k === "-" ? <Dash key={i} /> : <IconButton key={i} $on={k.endsWith("*")} aria-label={"视图" + i}><Icon k={k.replace("*", "")} s={8} /></IconButton>)}
          </RightBar>
        </Work>
        <Status>
          <span>如需在线帮助, 请按[F1]键</span>
          <Spacer />
          <Coord $w={32}>框架-1428</Coord><Coord $w={71}>U: -71080.5, 17587.5, 19745</Coord><Coord $w={71}>G: -71080.5, 17587.5, 19745</Coord>
          <StatusTools>
            <select aria-label="力单位"><option>kN</option></select><Icon k="down" s={5} /><select aria-label="长度单位"><option>mm</option></select><Icon k="down" s={5} />
            <Rule /><Icon k="pan" /><Icon k="select" /><Icon k="speaker" /><span>开关</span><Icon k="down" s={5} />
            <span>?</span><Color aria-label="颜色" /><span>1 :</span><span>/</span><input aria-label="比例" defaultValue="2" />
          </StatusTools>
        </Status>
      </AppFrame>
    </Page>
  );
}
